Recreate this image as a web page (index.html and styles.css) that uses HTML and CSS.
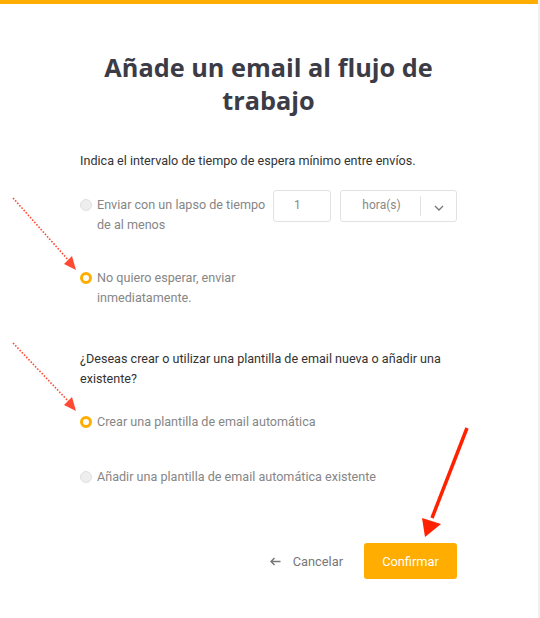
FILE: index.html
```html
<!DOCTYPE html>
<html lang="es">
<head>
<meta charset="utf-8">
<title>Añade un email al flujo de trabajo</title>
<link rel="stylesheet" href="styles.css">
</head>
<body>
<div class="page">
  <div class="topbar"></div>
  <div class="content">
    <h1 class="title">Añade un email al flujo de<br>trabajo</h1>

    <p class="label">Indica el intervalo de tiempo de espera mínimo entre envíos.</p>

    <div class="option option-delay">
      <span class="radio"></span>
      <span class="option-text text-narrow">Enviar con un lapso de tiempo de al menos</span>
      <div class="field number">1</div>
      <div class="field select">
        <span class="select-value">hora(s)</span>
        <span class="select-arrow">
          <svg width="10" height="6" viewBox="0 0 10 6"><path d="M1 1l4 4 4-4" fill="none" stroke="#777" stroke-width="1.3"/></svg>
        </span>
      </div>
    </div>

    <div class="option option-now">
      <span class="radio checked"></span>
      <span class="option-text text-narrow">No quiero esperar, enviar inmediatamente.</span>
    </div>

    <p class="label question">¿Deseas crear o utilizar una plantilla de email nueva o añadir una existente?</p>

    <div class="option option-create">
      <span class="radio checked"></span>
      <span class="option-text">Crear una plantilla de email automática</span>
    </div>

    <div class="option option-existing">
      <span class="radio"></span>
      <span class="option-text">Añadir una plantilla de email automática existente</span>
    </div>

    <div class="actions">
      <a class="cancel">
        <svg width="11" height="9" viewBox="0 0 11 9"><path d="M10.5 4.5H1.5M4.5 1L1 4.5 4.5 8" fill="none" stroke="#777" stroke-width="1.5"/></svg>
        <span>Cancelar</span>
      </a>
      <button class="confirm">Confirmar</button>
    </div>
  </div>

  <svg class="annotations" width="540" height="618" viewBox="0 0 540 618">
    <line x1="13" y1="198" x2="70" y2="262" stroke="#ff4a33" stroke-width="1.6" stroke-dasharray="1.6 1.6"/>
    <polygon points="76,270 64,264 72,256" fill="#ff4a33"/>
    <line x1="13" y1="343" x2="70" y2="403" stroke="#ff4a33" stroke-width="1.6" stroke-dasharray="1.6 1.6"/>
    <polygon points="76,411 64,405 72,397" fill="#ff4a33"/>
    <line x1="467" y1="428" x2="432" y2="518" stroke="#ff2200" stroke-width="3.5"/>
    <polygon points="425,537 422,518 441,524" fill="#ff2200"/>
  </svg>
</div>
</body>
</html>
```

FILE: styles.css
```css
html, body {
  margin: 0;
  padding: 0;
  background: #fff;
}

.page {
  position: relative;
  width: 538px;
  height: 618px;
  border-right: 2px solid #f0f0f0;
  font-family: Roboto, "Liberation Sans", sans-serif;
}

.topbar {
  height: 4px;
  background: #ffad00;
}

.content {
  padding: 0 81px 0 80px;
}

.title {
  margin: 47px 0 0;
  font-family: "Open Sans", sans-serif;
  font-weight: 700;
  font-size: 25.3px;
  line-height: 33px;
  color: #3c3c47;
  text-align: center;
}

.label {
  margin: 34px 0 0;
  font-size: 12.6px;
  line-height: 20px;
  color: #333;
}

.question {
  margin-top: 42px;
}

.option {
  display: flex;
  align-items: flex-start;
  font-size: 12.6px;
  line-height: 19.5px;
  color: #868686;
}

.radio {
  flex: none;
  width: 12px;
  height: 12px;
  box-sizing: border-box;
  margin: 4px 5px 0 0;
  border-radius: 50%;
  background: #eee;
  border: 1px solid #e0e0e0;
}

.radio.checked {
  background: #fff;
  border: 3px solid #ffad00;
}

.text-narrow {
  width: 176px;
}

.option-delay {
  margin-top: 19px;
}

.option-delay .radio {
  margin-top: 9px;
}

.option-delay .option-text {
  padding-top: 5px;
}

.field {
  box-sizing: border-box;
  height: 32px;
  border: 1px solid #e2e2e2;
  border-radius: 3px;
  font-size: 12px;
  color: #888;
  display: flex;
  align-items: center;
}

.number {
  width: 58px;
  padding-left: 20px;
}

.select {
  width: 117px;
  margin-left: 9px;
}

.select-value {
  flex: 1;
  text-align: center;
  padding-left: 2px;
}

.select-arrow {
  width: 36px;
  height: 20px;
  border-left: 1px solid #e2e2e2;
  display: flex;
  align-items: center;
  justify-content: center;
  padding-top: 3px;
  box-sizing: border-box;
}

.option-now {
  margin-top: 34px;
}

.option-create {
  margin-top: 23px;
}

.option-existing {
  margin-top: 35px;
}

.actions {
  display: flex;
  justify-content: flex-end;
  align-items: center;
  gap: 21px;
  margin-top: 57px;
}

.cancel {
  display: flex;
  align-items: center;
  gap: 12px;
  font-size: 12.8px;
  color: #777;
}

.confirm {
  width: 93px;
  height: 36px;
  border: none;
  border-radius: 3px;
  background: #ffad00;
  color: #fff;
  font-family: Roboto, "Liberation Sans", sans-serif;
  font-size: 12.8px;
  padding: 0;
}

.annotations {
  position: absolute;
  top: 0;
  left: 0;
  pointer-events: none;
}
```
